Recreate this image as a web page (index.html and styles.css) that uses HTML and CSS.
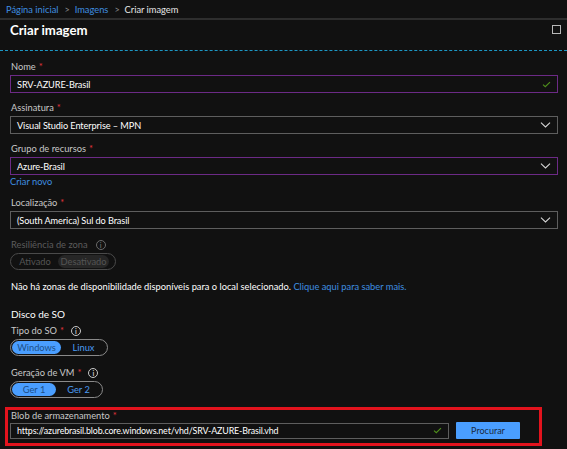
FILE: index.html
```html
<!DOCTYPE html>
<html lang="pt-BR">
<head>
<meta charset="utf-8">
<title>Criar imagem</title>
<link rel="stylesheet" href="styles.css">
</head>
<body>
<nav class="crumbs">
  <a class="crumb-link">Página inicial</a><span class="sep">&gt;</span><a class="crumb-link">Imagens</a><span class="sep">&gt;</span><span class="crumb-cur">Criar imagem</span>
</nav>
<header class="head">
  <h1 class="title">Criar imagem</h1>
  <span class="maximize"></span>
</header>
<main class="form">
  <div class="field f-nome">
    <div class="label">Nome <span class="req">*</span></div>
    <div class="input active"><span class="val">SRV-AZURE-Brasil</span>
      <svg class="check" viewBox="0 0 10 8" width="9" height="7"><path d="M1 4.2 L3.6 6.6 L9 1.2" fill="none" stroke="#4f8f1c" stroke-width="1.3"/></svg>
    </div>
  </div>
  <div class="field f-gap">
    <div class="label">Assinatura <span class="req">*</span></div>
    <div class="input"><span class="val">Visual Studio Enterprise – MPN</span>
      <svg class="chev" viewBox="0 0 12 7" width="11" height="6"><path d="M0.7 0.7 L6 5.8 L11.3 0.7" fill="none" stroke="#d8d8d8" stroke-width="1.2"/></svg>
    </div>
  </div>
  <div class="field f-gap">
    <div class="label">Grupo de recursos <span class="req">*</span></div>
    <div class="input active"><span class="val">Azure-Brasil</span>
      <svg class="chev" viewBox="0 0 12 7" width="11" height="6"><path d="M0.7 0.7 L6 5.8 L11.3 0.7" fill="none" stroke="#d8d8d8" stroke-width="1.2"/></svg>
    </div>
    <a class="link newlink">Criar novo</a>
  </div>
  <div class="field f-loc">
    <div class="label">Localização <span class="req">*</span></div>
    <div class="input"><span class="val">(South America) Sul do Brasil</span>
      <svg class="chev" viewBox="0 0 12 7" width="11" height="6"><path d="M0.7 0.7 L6 5.8 L11.3 0.7" fill="none" stroke="#d8d8d8" stroke-width="1.2"/></svg>
    </div>
  </div>
  <div class="field f-res">
    <div class="label disabled">Resiliência de zona <span class="info dis">i</span></div>
    <div class="toggle off">
      <span class="opt o-ativ">Ativado</span><span class="opt o-desat">Desativado</span>
    </div>
  </div>
  <p class="note">Não há zonas de disponibilidade disponíveis para o local selecionado. <a class="link">Clique aqui para saber mais.</a></p>
  <h2 class="section">Disco de SO</h2>
  <div class="field f-tipo">
    <div class="label">Tipo do SO <span class="req">*</span> <span class="info">i</span></div>
    <div class="toggle">
      <span class="opt sel o-win">Windows</span><span class="opt o-lin">Linux</span>
    </div>
  </div>
  <div class="field f-ger">
    <div class="label">Geração de VM <span class="req">*</span> <span class="info">i</span></div>
    <div class="toggle">
      <span class="opt sel o-g1">Ger 1</span><span class="opt o-g2">Ger 2</span>
    </div>
  </div>
  <div class="highlight">
    <div class="label hl-label">Blob de armazenamento <span class="req">*</span></div>
    <div class="blob-row">
      <div class="input blob"><span class="val blob-val">https://azurebrasil.blob.core.windows.net/vhd/SRV-AZURE-Brasil.vhd</span>
        <svg class="check" viewBox="0 0 10 8" width="9" height="7"><path d="M1 4.2 L3.6 6.6 L9 1.2" fill="none" stroke="#4f8f1c" stroke-width="1.3"/></svg>
      </div>
      <button class="btn">Procurar</button>
    </div>
  </div>
</main>
</body>
</html>
```
FILE: styles.css
```css
*, *::before, *::after { box-sizing: border-box; }

html, body {
  margin: 0;
  padding: 0;
  background: #111111;
  color: #ffffff;
  font-family: Lato, "Noto Sans", sans-serif;
  font-size: 9.3px;
  overflow: hidden;
}

.crumbs {
  height: 18px;
  line-height: 20px;
  padding-left: 6px;
  font-size: 9.3px;
  white-space: nowrap;
}
.crumb-link { color: #3f8fe0; }
.crumb-cur { color: #e6e6e6; }
.sep { color: #8a8a8a; margin: 0 5px 0 6px; font-size: 9px; }

.head {
  border-top: 2px solid #2e2e2e;
  border-bottom: 1px dashed #1c97c4;
  height: 33px;
  display: flex;
  align-items: flex-start;
  justify-content: space-between;
  padding: 0 6px 0 10px;
}
.title {
  margin: 0;
  font-size: 13.2px;
  font-weight: 700;
  line-height: 20px;
  color: #ffffff;
}
.maximize {
  width: 9px;
  height: 9px;
  border: 1px solid #b8b8b8;
  margin-top: 5px;
}

.form {
  padding: 9px 9px 0 10px;
}

.label {
  height: 14px;
  line-height: 14px;
  color: #c8c8c8;
  display: flex;
  align-items: center;
  gap: 3px;
  margin-left: 1px;
}
.label.disabled { color: #5c5c5c; }
.req { color: #e0343c; }

.info {
  display: inline-flex;
  align-items: center;
  justify-content: center;
  width: 10px;
  height: 10px;
  border: 1px solid #c8c8c8;
  border-radius: 50%;
  font-size: 7px;
  line-height: 1;
  margin-left: 4px;
  color: #c8c8c8;
  font-weight: 700;
}
.info.dis { border-color: #6a6a6a; color: #6a6a6a; margin-left: 5px; }

.input {
  margin-top: 1px;
  height: 18px;
  border: 1px solid #5e5e5e;
  display: flex;
  align-items: center;
  justify-content: space-between;
  padding: 0 6px 0 6px;
  color: #ffffff;
  font-size: 9.2px;
}
.input.active { border-color: #6c2a86; }
.val { white-space: nowrap; letter-spacing: -0.1px; }

.f-gap { margin-top: 8px; }
.f-loc { margin-top: 7px; }
.f-res { margin-top: 9px; }
.newlink { display: block; height: 14px; line-height: 14px; }
.link { color: #3f8fe0; }

.toggle {
  margin-top: 1px;
  display: inline-flex;
  align-items: center;
  height: 17px;
  border: 1px solid #8a8a8a;
  border-radius: 9px;
  padding: 0 1px;
}
.toggle.off { border-color: #4a4a4a; padding-right: 6px; }
.opt {
  height: 13px;
  line-height: 13px;
  border-radius: 7px;
  color: #4a9bf2;
  text-align: center;
}
.opt.sel { background: #4a9eff; color: #1d4f88; }
.toggle.off .opt { color: #555555; }
.o-ativ { width: 46px; }
.o-desat { width: 51px; background: #262626; }
.o-win { width: 49px; }
.o-lin { width: 45px; }
.o-g1 { width: 44px; }
.o-g2 { width: 45px; }

.note {
  margin: 10px 0 0 1px;
  height: 14px;
  line-height: 14px;
  color: #ffffff;
  white-space: nowrap;
}

.section {
  margin: 12px 0 0 1px;
  font-size: 10px;
  font-weight: 400;
  line-height: 16px;
  height: 16px;
}
.f-tipo { margin-top: 2px; }
.f-ger { margin-top: 10px; }

.highlight {
  margin: 9px 16px 0 -5px;
  height: 39px;
  border: 3px solid #e3131d;
  padding: 0 9px 0 2px;
}
.hl-label { height: 11px; line-height: 11px; }
.blob-row {
  display: flex;
  align-items: center;
  gap: 7px;
  margin-top: 1px;
  height: 17px;
}
.input.blob { flex: 0 0 439px; margin-top: 0; height: 16px; padding-left: 6px; }
.blob-val { font-size: 8.9px; letter-spacing: -0.14px; }
.btn {
  height: 17px;
  width: 64px;
  border: none;
  background: #4a9eff;
  color: #1a2a40;
  font-family: Lato, "Noto Sans", sans-serif;
  font-size: 9px;
  padding: 0;
  border-radius: 1px;
}
```
